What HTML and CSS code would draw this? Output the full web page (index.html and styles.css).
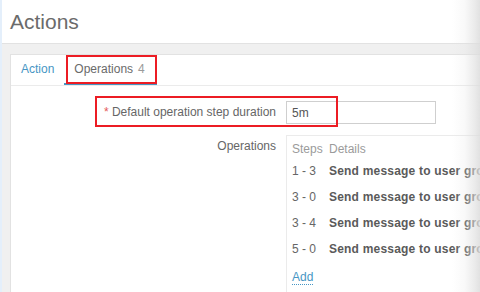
FILE: index.html
```html
<!DOCTYPE html>
<html>
<head>
<meta charset="utf-8">
<link rel="stylesheet" href="styles.css">
</head>
<body>
<div class="page">
  <header class="top">
    <h1 class="title">Actions</h1>
  </header>
  <main class="panel">
    <nav class="tabs">
      <a class="tab">Action</a>
      <a class="tab active">Operations<span class="count">4</span><span class="mark mark-tab"></span></a>
    </nav>
    <div class="form">
      <div class="row">
        <label class="label"><span class="req">*</span> Default operation step duration</label>
        <div class="field"><input class="input" type="text" value="5m"></div>
        <span class="mark mark-row"></span>
      </div>
      <div class="row row-ops">
        <label class="label label-ops">Operations</label>
        <div class="field">
          <div class="ops">
            <table class="ops-table">
              <thead>
                <tr><th class="c-steps">Steps</th><th>Details</th></tr>
              </thead>
              <tbody>
                <tr><td class="c-steps">1 - 3</td><td class="detail">Send message to user groups: Zabbix administrators</td></tr>
                <tr><td class="c-steps">3 - 0</td><td class="detail">Send message to user groups: Zabbix administrators</td></tr>
                <tr><td class="c-steps">3 - 4</td><td class="detail">Send message to user groups: Zabbix administrators</td></tr>
                <tr><td class="c-steps">5 - 0</td><td class="detail">Send message to user groups: Zabbix administrators</td></tr>
              </tbody>
            </table>
            <div class="add-wrap"><a class="add">Add</a></div>
          </div>
        </div>
      </div>
    </div>
  </main>
</div>
</body>
</html>
```

FILE: styles.css
```css
html, body {
  margin: 0;
  padding: 0;
}
body {
  width: 480px;
  height: 292px;
  overflow: hidden;
  background: #f0f0f0;
  font-family: "Liberation Sans", Arial, sans-serif;
  font-size: 12px;
  color: #666;
}
.page {
  position: relative;
  width: 480px;
  height: 292px;
  overflow: hidden;
}
.page::before {
  content: "";
  position: absolute;
  left: 0;
  top: 0;
  bottom: 0;
  width: 2px;
  background: #e4effb;
  z-index: 5;
}
.page::after {
  content: "";
  position: absolute;
  right: 0;
  top: 0;
  bottom: 0;
  width: 28px;
  background: linear-gradient(to right, rgba(225,225,225,0) 0%, rgba(225,225,225,0.2) 45%, rgba(222,222,222,0.6) 80%, rgba(220,220,220,0.85) 100%);
  z-index: 5;
}
.top {
  height: 44px;
  background: #fff;
  border-bottom: 1px solid #e2e2e2;
  box-sizing: border-box;
  padding: 10px 0 0 10px;
}
.title {
  margin: 0;
  font-size: 21px;
  line-height: 24px;
  font-weight: normal;
  color: #6b6b6b;
}
.panel {
  margin: 10px 0 0 10px;
  width: 620px;
  height: 300px;
  background: #fff;
  border-top: 1px solid #e2e2e2;
  border-left: 1px solid #e2e2e2;
}
.tabs {
  display: flex;
  height: 30px;
  border-bottom: 1px solid #ebebeb;
}
.tab {
  position: relative;
  display: block;
  padding: 0 10px;
  line-height: 28px;
  height: 28px;
  border-bottom: 2px solid transparent;
  color: #4796c4;
}
.tab.active {
  color: #6a6a6a;
  border-bottom-color: #4796c4;
  padding-right: 12px;
}
.count {
  margin-left: 5px;
  color: #9a9a9a;
}
.mark {
  position: absolute;
  border: 2px solid #ec1c24;
  box-sizing: border-box;
  pointer-events: none;
}
.mark-tab {
  left: 2px;
  top: 0;
  right: 0;
  bottom: -1px;
}
.form {
  padding-top: 15px;
}
.row {
  position: relative;
  display: flex;
  align-items: flex-start;
}
.row-ops {
  margin-top: 11px;
}
.label {
  width: 265px;
  flex: none;
  text-align: right;
  line-height: 23px;
  color: #666;
}
.label-ops {
  line-height: 14px;
  padding-top: 4px;
}
.req {
  color: #e45959;
}
.field {
  margin-left: 10px;
}
.input {
  display: block;
  box-sizing: border-box;
  width: 150px;
  height: 23px;
  margin: 0;
  padding: 0 5px;
  border: 1px solid #cfcfcf;
  font-family: "Liberation Sans", Arial, sans-serif;
  font-size: 12px;
  color: #555;
  background: #fff;
}
.mark-row {
  left: 84px;
  top: -5px;
  width: 243px;
  height: 31px;
}
.ops {
  border: 1px solid #ebebeb;
  width: 500px;
}
.ops-table {
  border-collapse: collapse;
  white-space: nowrap;
}
.ops-table th {
  font-weight: normal;
  color: #9b9b9b;
  text-align: left;
  line-height: 14px;
  padding: 6px 0 2px 0;
}
.ops-table td {
  line-height: 14px;
  padding: 6px 0;
  color: #666;
}
.ops-table .c-steps {
  width: 32px;
  padding-left: 5px;
  padding-right: 5px;
}
.ops-table .detail {
  font-weight: bold;
  color: #5a5a5a;
  letter-spacing: 0.2px;
}
.add-wrap {
  padding: 8px 0 10px 5px;
  line-height: 14px;
}
.add {
  color: #4796c4;
  border-bottom: 1px dotted #4796c4;
}
```
